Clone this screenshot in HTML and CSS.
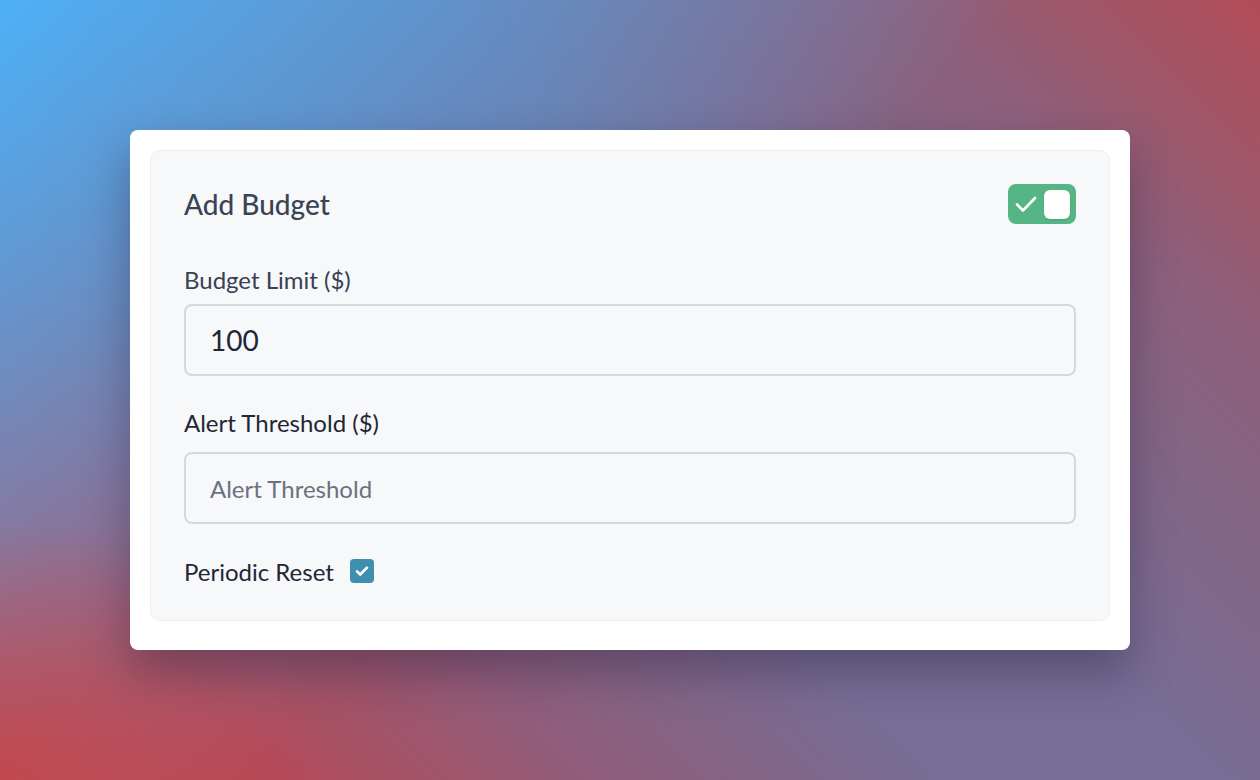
FILE: index.html
```html
<!DOCTYPE html>
<html lang="en">
<head>
<meta charset="utf-8">
<title>Add Budget</title>
<link rel="stylesheet" href="styles.css">
</head>
<body>
<div class="card">
  <div class="panel">
    <div class="header">
      <h2 class="title">Add Budget</h2>
      <div class="toggle">
        <svg class="toggle-check" width="22" height="22" viewBox="0 0 22 22"><path d="M2 11.5l6 6L20 5" fill="none" stroke="#fff" stroke-width="2.6" stroke-linecap="round" stroke-linejoin="round"/></svg>
        <span class="knob"></span>
      </div>
    </div>
    <div class="field field-limit">
      <label class="label label-limit">Budget Limit ($)</label>
      <div class="input value">100</div>
    </div>
    <div class="field field-alert">
      <label class="label label-alert">Alert Threshold ($)</label>
      <div class="input placeholder">Alert Threshold</div>
    </div>
    <div class="reset-row">
      <span class="reset-label">Periodic Reset</span>
      <span class="checkbox">
        <svg width="16" height="16" viewBox="0 0 16 16"><path d="M3 8.4l3.2 3.1L13 4.6" fill="none" stroke="#fff" stroke-width="2.6" stroke-linecap="round" stroke-linejoin="round"/></svg>
      </span>
    </div>
  </div>
</div>
</body>
</html>
```

FILE: styles.css
```css
* { box-sizing: border-box; }
html, body { margin: 0; padding: 0; }
body {
  width: 1260px;
  height: 780px;
  overflow: hidden;
  display: flex;
  align-items: center;
  justify-content: center;
  font-family: Lato, "Noto Sans", sans-serif;
  background:
    radial-gradient(ellipse 320px 260px at 0% 100%, rgba(198,68,72,0.85) 0%, rgba(198,68,72,0.4) 50%, rgba(198,68,72,0) 100%),
    linear-gradient(135deg, rgba(78,176,246,1) 0%, rgba(78,176,246,0.55) 22%, rgba(78,176,246,0) 50%),
    linear-gradient(45deg, #c8444a 0%, #b24b5a 14%, #8e5e7c 30%, #776d95 46%, #776d95 60%, #8c607c 82%, #b24c56 100%);
}
.card {
  width: 1000px;
  background: #fff;
  border-radius: 8px;
  padding: 20px 20px 29px;
  box-shadow: 0 22px 45px rgba(30, 20, 50, 0.35);
}
.panel {
  background: #f7f8fa;
  border: 1px solid #eceef1;
  border-radius: 10px;
  padding: 33px 33px 34px;
}
.header {
  display: flex;
  align-items: center;
  justify-content: space-between;
  height: 40px;
}
.title {
  margin: 0;
  font-size: 28px;
  font-weight: 500;
  color: #3a4353;
}
.toggle {
  width: 68px;
  height: 40px;
  border-radius: 8px;
  background: #55b585;
  display: flex;
  align-items: center;
  justify-content: space-between;
  padding: 0 6px 0 7px;
}
.toggle-check { display: block; }
.knob {
  width: 26px;
  height: 29px;
  border-radius: 6px;
  background: #fff;
  box-shadow: 0 1px 2px rgba(0,0,0,0.12);
}
.field { display: flex; flex-direction: column; }
.field-limit { margin-top: 41px; }
.field-alert { margin-top: 32px; }
.label {
  font-size: 24px;
  line-height: 30px;
}
.label-limit { color: #384152; margin-bottom: 9px; }
.label-alert { color: #1f2735; margin-bottom: 14px; }
.input {
  height: 72px;
  border: 2px solid #d5d7dc;
  border-radius: 8px;
  background: #f7f8fa;
  display: flex;
  align-items: center;
  padding: 0 24px;
}
.value { font-size: 28px; color: #1f2735; }
.placeholder { font-size: 24px; color: #6b7180; }
.reset-row {
  display: flex;
  align-items: center;
  gap: 16px;
  margin-top: 32px;
  height: 30px;
}
.reset-label { font-size: 24px; color: #1f2735; }
.checkbox {
  width: 24px;
  height: 24px;
  border-radius: 4px;
  background: #418fb0;
  display: flex;
  align-items: center;
  justify-content: center;
}
.checkbox svg { display: block; }
```
